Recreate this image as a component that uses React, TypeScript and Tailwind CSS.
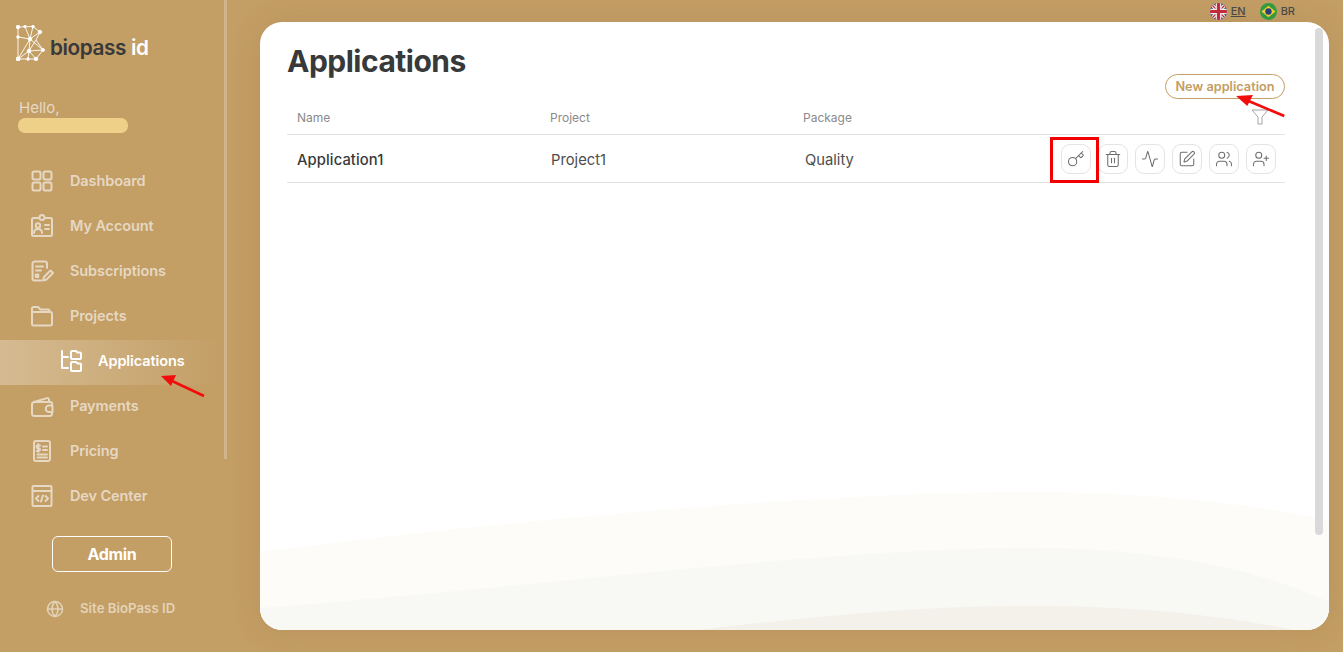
import { Activity, Globe, Key, SquarePen, Trash2, UserPlus, Users } from "lucide-react";
import type { ReactNode } from "react";

const font = "font-['Inter','Liberation_Sans',sans-serif]";

function IconBox({ children }: { children: ReactNode }) {
  return (
    <svg viewBox="0 0 24 24" fill="none" stroke="currentColor" strokeWidth="2" strokeLinecap="round" strokeLinejoin="round" className="w-[24px] h-[24px]">
      {children}
    </svg>
  );
}

const DashboardIcon = () => (
  <IconBox>
    <rect x="2.500" y="2.500" width="8" height="8" rx="1.800" />
    <rect x="13.500" y="2.500" width="8" height="8" rx="1.800" />
    <rect x="2.500" y="13.500" width="8" height="8" rx="1.800" />
    <rect x="13.500" y="13.500" width="8" height="8" rx="1.800" />
  </IconBox>
);

const AccountIcon = () => (
  <IconBox>
    <path d="M9 4H3.500A1.500 1.500 0 0 0 2 5.500v15A1.500 1.500 0 0 0 3.500 22h17a1.500 1.500 0 0 0 1.500-1.500v-15A1.500 1.500 0 0 0 20.500 4H15" />
    <rect x="9.500" y="1" width="5" height="5" rx="2.500" />
    <circle cx="8" cy="11.500" r="2.200" />
    <path d="M4 19c0-2.500 1.800-4 4-4s4 1.500 4 4" />
    <path d="M15 11h4M15 15h4" />
  </IconBox>
);

const SubscriptionsIcon = () => (
  <IconBox>
    <path d="M17 9V4.500A2 2 0 0 0 15 2.500H4.500a2 2 0 0 0-2 2v15a2 2 0 0 0 2 2H11" />
    <path d="M6 7.500h7M6 11.500h5" />
    <rect x="5.800" y="15.500" width="2.500" height="2.500" />
    <path d="M13 21.500l1-3.500 6.500-6.500 2.500 2.500-6.500 6.500z" />
  </IconBox>
);

const ProjectsIcon = () => (
  <IconBox>
    <path d="M2 20V9.500A1.500 1.500 0 0 1 3.500 8h17A1.500 1.500 0 0 1 22 9.500V20a1.500 1.500 0 0 1-1.500 1.500h-17A1.500 1.500 0 0 1 2 20z" />
    <path d="M2 8V4.500A1.500 1.500 0 0 1 3.500 3H8l2.500 2.500H18a1.500 1.500 0 0 1 1.500 1.500v1" />
  </IconBox>
);

const ApplicationsIcon = () => (
  <IconBox>
    <path d="M3 2v17h6M3 8h6" />
    <path d="M12 5V3a1 1 0 0 1 1-1h4l1.500 1.500H21a1 1 0 0 1 1 1V9a1 1 0 0 1-1 1h-8a1 1 0 0 1-1-1z" />
    <path d="M12 15v-1a1 1 0 0 1 1-1h4l1.500 1.500H21a1 1 0 0 1 1 1V21a1 1 0 0 1-1 1h-8a1 1 0 0 1-1-1z" />
  </IconBox>
);

const PaymentsIcon = () => (
  <IconBox>
    <path d="M19 8V5.500a1.500 1.500 0 0 0-2-1.400L4 8" />
    <path d="M22 11.500V9.500A1.500 1.500 0 0 0 20.500 8h-16A2.500 2.500 0 0 0 2 10.500v9A2.500 2.500 0 0 0 4.500 22h15a2.500 2.500 0 0 0 2.500-2.500V18" />
    <path d="M22 11.500h-3a3.200 3.200 0 0 0 0 6.500h3.500v-6.500z" />
  </IconBox>
);

const PricingIcon = () => (
  <IconBox>
    <rect x="4" y="2" width="16" height="20" rx="2" />
    <path d="M10 6.500H7.800a1.300 1.300 0 0 0 0 2.700h.9a1.300 1.300 0 0 1 0 2.700H6.800M8.200 5v8" />
    <path d="M13 7.500h4M13 11h4M7.500 15.500h9.500M7.500 18.500h9.500" />
  </IconBox>
);

const DevIcon = () => (
  <IconBox>
    <rect x="2.500" y="2" width="19" height="20" rx="1" />
    <path d="M2.500 7h19" />
    <path d="M8.500 12l-2.500 2.500L8.500 17M15.500 12l2.500 2.500-2.500 2.500M13 11.500l-2 6" />
  </IconBox>
);

const nav = [
  { label: "Dashboard", icon: <DashboardIcon /> },
  { label: "My Account", icon: <AccountIcon /> },
  { label: "Subscriptions", icon: <SubscriptionsIcon /> },
  { label: "Projects", icon: <ProjectsIcon /> },
  { label: "Applications", icon: <ApplicationsIcon />, active: true },
  { label: "Payments", icon: <PaymentsIcon /> },
  { label: "Pricing", icon: <PricingIcon /> },
  { label: "Dev Center", icon: <DevIcon /> },
];

function Logo() {
  return (
    <div className="flex items-center gap-[4px]">
      <svg viewBox="0 0 30 36" className="w-[30px] h-[36px]" fill="white" stroke="white" strokeWidth="0.900">
        <path
          fill="none"
          d="M2 2L17 1.500 24 7 20 15 27 25 20 34H2L2 2zM9 1.500L14 14M17 1.500L14 14 2 34M2 12L14 14 27 25 13 26 20 34M24 7L14 14 13 26 12 34M20 15L13 26 2 34"
        />
        <circle cx="2" cy="2" r="1.800" />
        <circle cx="9" cy="1.500" r="1.300" />
        <circle cx="17" cy="1.500" r="1.300" />
        <circle cx="24" cy="7" r="1.800" />
        <circle cx="2" cy="12" r="1.300" />
        <circle cx="14" cy="14" r="1.800" />
        <circle cx="27" cy="25" r="1.500" />
        <circle cx="13" cy="26" r="1.800" />
        <circle cx="2" cy="34" r="2" />
        <circle cx="12" cy="34" r="1.300" />
        <circle cx="20" cy="34" r="1.800" />
      </svg>
      <span className={`${font} text-[20.750px] leading-[24px] font-semibold tracking-[-0.4px] text-[#37393b] mt-[10px]`}>
        biopass <span className="text-white">id</span>
      </span>
    </div>
  );
}

function UkFlag() {
  return (
    <svg viewBox="0 0 24 24" className="w-[17px] h-[17px] rounded-full">
      <rect width="24" height="24" fill="#2b3f80" />
      <path d="M0 0l24 24M24 0L0 24" stroke="#f3f3f3" strokeWidth="5" />
      <path d="M0 0l24 24M24 0L0 24" stroke="#c8283c" strokeWidth="1.800" />
      <path d="M12 0v24M0 12h24" stroke="#f3f3f3" strokeWidth="8" />
      <path d="M12 0v24M0 12h24" stroke="#c8283c" strokeWidth="4.500" />
    </svg>
  );
}

function BrFlag() {
  return (
    <svg viewBox="0 0 24 24" className="w-[17px] h-[17px] rounded-full">
      <rect width="24" height="24" fill="#2f9e44" />
      <path d="M12 4l10 8-10 8-10-8z" fill="#f6d32d" />
      <circle cx="12" cy="12" r="4.500" fill="#28407f" />
    </svg>
  );
}

function Sidebar() {
  return (
    <aside className="flex w-[227px] shrink-0">
      <div className="w-[224px] flex flex-col">
        <div className="pl-[16px] pt-[25px]">
          <Logo />
        </div>
        <div className="pl-[19px] pt-[38px] text-[15px] leading-[18px] text-[#e7d9c4]">Hello,</div>
        <div className="ml-[18px] mt-[1px] w-[110px] h-[15px] rounded-[7px] bg-[#efd089]"></div>
        <nav className="mt-[27px] flex flex-col">
          {nav.map((item) => (
            <div
              key={item.label}
              className={
                item.active
                  ? "h-[45px] pb-[3px] flex items-center pl-[59px] gap-[15px] text-white bg-gradient-to-r from-[#d5bb92] to-transparent"
                  : "h-[45px] pb-[3px] flex items-center pl-[30px] gap-[16px] text-[#e6d8c3]"
              }
            >
              {item.icon}
              <span className={`${font} text-[14.500px] font-semibold tracking-[-0.1px]`}>{item.label}</span>
            </div>
          ))}
        </nav>
        <button className={`${font} ml-[52px] mt-[16px] w-[120px] h-[36px] rounded-[6px] border border-white text-white text-[16px] font-bold tracking-[-0.3px]`}>
          Admin
        </button>
        <div className="ml-[46px] mt-[27px] flex items-center gap-[16px] text-[#e3d3b9]">
          <Globe size={18} strokeWidth={2} />
          <span className={`${font} text-[13.250px] font-semibold`}>Site BioPass ID</span>
        </div>
      </div>
      <div className="w-[3px] h-[459px] bg-[#d1b58a]"></div>
    </aside>
  );
}

function ActionButton({ children }: { children: ReactNode }) {
  return (
    <button className="w-[30px] h-[30px] rounded-[9px] border border-[#e4e4e4] flex items-center justify-center text-[#6e6e6e]">
      {children}
    </button>
  );
}

function Waves() {
  return (
    <svg viewBox="0 0 1069 150" preserveAspectRatio="none" className="absolute bottom-0 left-0 w-full h-[150px]">
      <path d="M0 72C250 40 560 12 771 12c130 0 230 14 298 28v110H0z" fill="#fefcf9" />
      <path d="M0 128C250 110 560 68 771 68c130 0 230 22 298 54v28H0z" fill="#f8f8f4" />
      <path d="M436 150C560 136 660 126 771 126c110 0 190 10 264 24z" fill="#f4f0ea" />
    </svg>
  );
}

function Arrow({ className }: { className: string }) {
  return (
    <svg viewBox="0 0 50 24" preserveAspectRatio="none" className={`absolute h-[24px] ${className}`}>
      <path d="M44 22L10 6" stroke="#f20d0d" strokeWidth="2.500" />
      <path d="M1 2l15-1-5 11z" fill="#f20d0d" />
    </svg>
  );
}

export default function App() {
  return (
    <div className={`${font} relative w-[1343px] h-[652px] overflow-hidden flex bg-[#c39e65]`}>
      <Sidebar />
      <main className="flex-1 flex flex-col pl-[33px] pr-[14px] pb-[22px]">
        <div className="h-[22px] flex items-center justify-end gap-[13px] pr-[34px] text-[11px] font-medium text-[#4a4a4a]">
          <div className="flex items-center gap-[4px]">
            <UkFlag />
            <span className="underline mr-[1px]">EN</span>
          </div>
          <div className="flex items-center gap-[4px]">
            <BrFlag />
            <span>BR</span>
          </div>
        </div>
        <section className="relative flex-1 rounded-[22px] bg-white overflow-hidden shadow-[0_0_30px_rgba(120,90,40,0.15)]">
          <Waves />
          <div className="absolute right-[6px] top-[6px] w-[8px] h-[507px] rounded-full bg-[#d9d9d9]"></div>
          <div className="relative pl-[27px] pr-[44px]">
            <div className="flex justify-between items-start h-[78px]">
              <h1 className="pt-[20px] text-[30px] leading-[38px] font-bold tracking-[-0.500px] text-[#37393b]">Applications</h1>
              <button className="mt-[52px] w-[120px] h-[25px] pt-[1px] rounded-full border border-[#c39e65] text-[12.750px] font-semibold text-[#c39e65]">
                New application
              </button>
            </div>
            <div className="h-[35px] pt-[2px] flex items-center border-b border-[#e2e2e2] pl-[10px] text-[12px] text-[#8a8a8a]">
              <span className="w-[253px]">Name</span>
              <span className="w-[253px]">Project</span>
              <span className="flex-1">Package</span>
              <svg viewBox="0 0 18 16" className="w-[18px] h-[16px] mr-[16px] mb-[2px] text-[#a3a3a3]" fill="none" stroke="currentColor" strokeWidth="1">
                <path d="M1 1h16l-6 7v7H7V8z" />
              </svg>
            </div>
            <div className="h-[48px] flex items-center border-b border-[#e2e2e2] pl-[10px] text-[14.750px] text-[#4d4d4d]">
              <span className="w-[254px] pt-[3px] font-medium tracking-[0.1px] text-[#37393b]">Application1</span>
              <span className="w-[254px] pt-[3px]">Project1</span>
              <span className="flex-1 pt-[3px]">Quality</span>
              <div className="relative flex gap-[7px] mr-[9px] mt-[1px]">
                <ActionButton><Key size={18} strokeWidth={1.400} /></ActionButton>
                <ActionButton><Trash2 size={18} strokeWidth={1.400} /></ActionButton>
                <ActionButton><Activity size={18} strokeWidth={1.400} /></ActionButton>
                <ActionButton><SquarePen size={18} strokeWidth={1.400} /></ActionButton>
                <ActionButton><Users size={18} strokeWidth={1.400} /></ActionButton>
                <ActionButton><UserPlus size={18} strokeWidth={1.400} /></ActionButton>
              </div>
            </div>
          </div>
        </section>
      </main>
      {/* annotations drawn over the screenshot */}
      <div className="absolute left-[1050px] top-[137px] w-[49px] h-[46px] border-[3px] border-[#f20000]"></div>
      <Arrow className="left-[1235px] top-[94px] w-[56px]" />
      <Arrow className="left-[160px] top-[374px] w-[50px]" />
    </div>
  );
}
